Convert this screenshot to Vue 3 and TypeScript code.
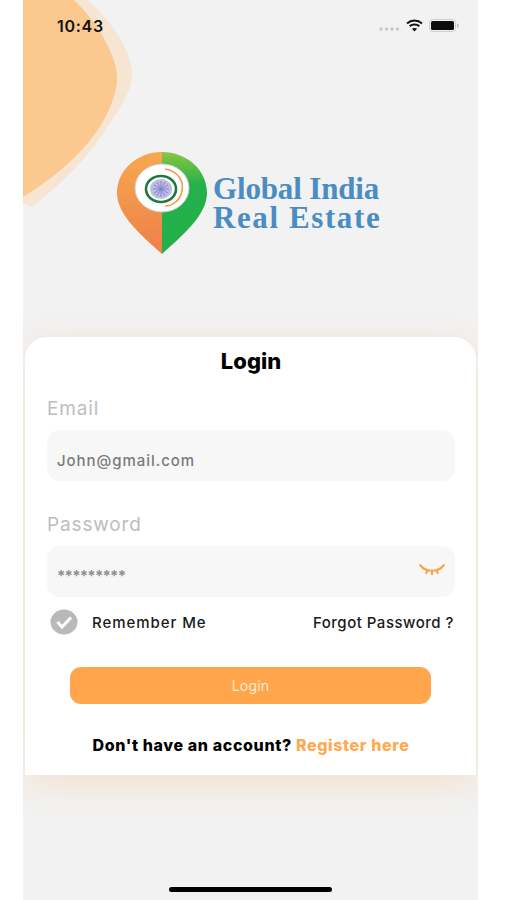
<script setup lang="ts">
const spokes = Array.from({ length: 12 }, (_, i) => i * 30);
</script>

<template>
  <div class="phone">
    <svg class="blob" width="120" height="215" viewBox="0 0 120 215" aria-hidden="true">
      <path d="M0 203 L9 207 C35 186 62 162 80 133 C100 105 110 88 109 72 C107 48 88 20 62 -2 L0 -2 Z" fill="#f6e5d2" />
      <path d="M0 197 C30 178 55 158 74 131 C87 112 95 90 94 76 C92 52 74 22 49 -2 L0 -2 Z" fill="#fbc88f" />
    </svg>

    <header class="status">
      <span class="time">10:43</span>
      <div class="status-icons">
        <svg width="21" height="6" viewBox="0 0 21 6" class="signal" aria-hidden="true">
          <circle cx="2" cy="3" r="1.7" fill="#c8c8c8" />
          <circle cx="7.5" cy="3" r="1.7" fill="#c8c8c8" />
          <circle cx="13" cy="3" r="1.7" fill="#c8c8c8" />
          <circle cx="18.5" cy="3" r="1.7" fill="#c8c8c8" />
        </svg>
        <svg width="17" height="13" viewBox="0 0 17 13" aria-hidden="true">
          <path d="M1 4.4 C5.3 0.6 11.7 0.6 16 4.4" fill="none" stroke="#111" stroke-width="2" />
          <path d="M3.7 7.1 C6.4 4.9 10.6 4.9 13.3 7.1" fill="none" stroke="#111" stroke-width="2" />
          <path d="M8.5 12.6 L5.9 9.7 C7.4 8.6 9.6 8.6 11.1 9.7 Z" fill="#111" />
        </svg>
        <svg width="30" height="13" viewBox="0 0 30 13" aria-hidden="true">
          <rect x="0.5" y="0.5" width="26" height="12" rx="3" fill="none" stroke="#cfcfcf" />
          <rect x="2" y="2" width="23" height="9" rx="1.6" fill="#0c0c0c" />
          <rect x="28" y="4.5" width="1.5" height="4" rx="0.7" fill="#bdbdbd" />
        </svg>
      </div>
    </header>

    <div class="logo">
      <svg width="92" height="104" viewBox="0 0 92 104" aria-hidden="true">
        <defs>
          <linearGradient id="pinOrange" x1="0" y1="0" x2="0" y2="1">
            <stop offset="0" stop-color="#f6a94f" />
            <stop offset="1" stop-color="#ee7f4a" />
          </linearGradient>
          <linearGradient id="pinGreen" x1="0" y1="0" x2="0" y2="1">
            <stop offset="0" stop-color="#8cc640" />
            <stop offset="0.32" stop-color="#24b14c" />
            <stop offset="1" stop-color="#22b04b" />
          </linearGradient>
        </defs>
        <path d="M46 1 C21 1 1 19 1 42 C1 64 26 85 46 103 Z" fill="url(#pinOrange)" />
        <path d="M46 1 C71 1 91 19 91 42 C91 64 66 85 46 103 Z" fill="url(#pinGreen)" />
        <ellipse cx="46" cy="37" rx="27" ry="24" fill="#fff" stroke="#cfcfcf" stroke-width="1" />
        <path d="M49 18 C62 20 68 30 66 40 C64 50 56 55 49 55" fill="none" stroke="#f29a45" stroke-width="1.6" />
        <ellipse cx="45" cy="38" rx="15" ry="13" fill="#fff" stroke="#1f7a3d" stroke-width="2.6" />
        <ellipse cx="45" cy="38" rx="11" ry="10" fill="#bcbce4" />
        <g stroke="#7f7fc2" stroke-width="0.5">
          <line v-for="a in spokes" :key="a" x1="45" y1="30" x2="45" y2="46" :transform="`rotate(${a} 45 38)`" />
        </g>
      </svg>
      <div class="brand">
        <div class="brand-a">Global India</div>
        <div class="brand-b">Real Estate</div>
      </div>
    </div>

    <main class="card">
      <h1 class="title">Login</h1>

      <label class="label">Email</label>
      <div class="input">John@gmail.com</div>

      <label class="label label-gap">Password</label>
      <div class="input input-pass">
        <span class="dots">*********</span>
        <svg width="26" height="13" viewBox="0 0 26 13" aria-hidden="true">
          <path d="M3 3 C8 8 18 8 23 3" fill="none" stroke="#f7a247" stroke-width="2.2" />
          <path d="M0.5 0.5 L4.5 4.5 M8.5 6 L7 10 M17.5 6 L19 10 M25.5 0.5 L21.5 4.5 M13 7 L13 11" fill="none" stroke="#f7a247" stroke-width="2" />
        </svg>
      </div>

      <div class="options">
        <div class="remember">
          <svg width="28" height="26" viewBox="0 0 28 26" aria-hidden="true">
            <ellipse cx="14" cy="13" rx="13.5" ry="12.5" fill="#b9b9b9" />
            <path d="M7.5 13 L12 18 L21 8.5" fill="none" stroke="#fff" stroke-width="3" />
          </svg>
          <span class="remember-text">Remember Me</span>
        </div>
        <span>Forgot Password ?</span>
      </div>

      <button class="login" type="button">Login</button>

      <p class="footer">Don't have an account? <span class="register">Register here</span></p>
    </main>

    <div class="home"></div>
  </div>
</template>

<style>
html,
body {
  background: #fff;
}
</style>

<style scoped>
.phone {
  position: relative;
  width: 455px;
  height: 900px;
  margin-left: 23px;
  background: #f2f2f2;
  overflow: hidden;
  display: flex;
  flex-direction: column;
  font-family: Inter, "Noto Sans", sans-serif;
}
.blob {
  position: absolute;
  left: 0;
  top: 0;
}
.status {
  position: relative;
  height: 52px;
  padding: 14px 19px 0 34px;
  box-sizing: border-box;
  display: flex;
  justify-content: space-between;
  align-items: flex-start;
}
.time {
  font-size: 16px;
  line-height: 24px;
  font-weight: 600;
  color: #111;
  letter-spacing: 0.7px;
}
.status-icons {
  display: flex;
  align-items: center;
  gap: 6px;
  padding-top: 5px;
}
.signal {
  margin-top: 7px;
}
.logo {
  margin-top: 99px;
  margin-left: 93px;
  display: flex;
  align-items: center;
  gap: 5px;
}
.brand {
  font-family: "Liberation Serif", serif;
  font-size: 31px;
  line-height: 29px;
  color: #4a8dc2;
  font-weight: 700;
}
.brand-a {
  letter-spacing: -0.15px;
}
.brand-b {
  letter-spacing: 1.6px;
}
.card {
  width: 451px;
  margin: 82px 0 0 2px;
  padding: 12px 21px 18px 22px;
  box-sizing: border-box;
  background: #fff;
  border-radius: 22px 22px 0 0;
  box-shadow: 0 8px 34px rgba(250, 170, 90, 0.24);
}
.title {
  margin: 0;
  font-size: 22px;
  line-height: 24px;
  font-weight: 800;
  text-align: center;
  color: #000;
}
.label {
  display: block;
  margin-top: 24px;
  font-size: 19px;
  line-height: 24px;
  color: #bdbdbd;
  letter-spacing: 0.85px;
}
.label-gap {
  margin-top: 32px;
}
.input {
  height: 51px;
  margin-top: 9px;
  padding: 10px 10px 0;
  box-sizing: border-box;
  background: #f7f7f7;
  border-radius: 13px;
  display: flex;
  align-items: center;
  font-size: 15px;
  font-weight: 500;
  color: #7a7a7a;
  letter-spacing: 0.95px;
}
.input-pass {
  justify-content: space-between;
  padding-top: 8px;
}
.input-pass svg {
  margin-top: -10px;
}
.dots {
  font-size: 15px;
  font-weight: 700;
  letter-spacing: -0.8px;
  color: #8f8f8f;
}
.options {
  height: 28px;
  margin-top: 11px;
  padding: 0 1px 0 3px;
  display: flex;
  justify-content: space-between;
  align-items: center;
  font-size: 15px;
  font-weight: 500;
  color: #1a1a1a;
  letter-spacing: 0.5px;
}
.remember {
  display: flex;
  align-items: center;
  gap: 14px;
}
.remember-text {
  letter-spacing: 0.95px;
}
.login {
  display: block;
  width: 361px;
  height: 37px;
  margin: 31px 0 0 23px;
  padding: 0;
  border: 0;
  border-radius: 11px;
  background: #ffa64d;
  color: #fde9d3;
  font-family: inherit;
  font-size: 14px;
  letter-spacing: 0.2px;
}
.footer {
  margin: 29px 0 0;
  font-size: 16px;
  line-height: 24px;
  font-weight: 800;
  text-align: center;
  color: #000;
  letter-spacing: 0.62px;
}
.register {
  color: #ffa950;
}
.home {
  width: 163px;
  height: 5px;
  margin: auto 0 8px 146px;
  border-radius: 3px;
  background: #000;
}
</style>
